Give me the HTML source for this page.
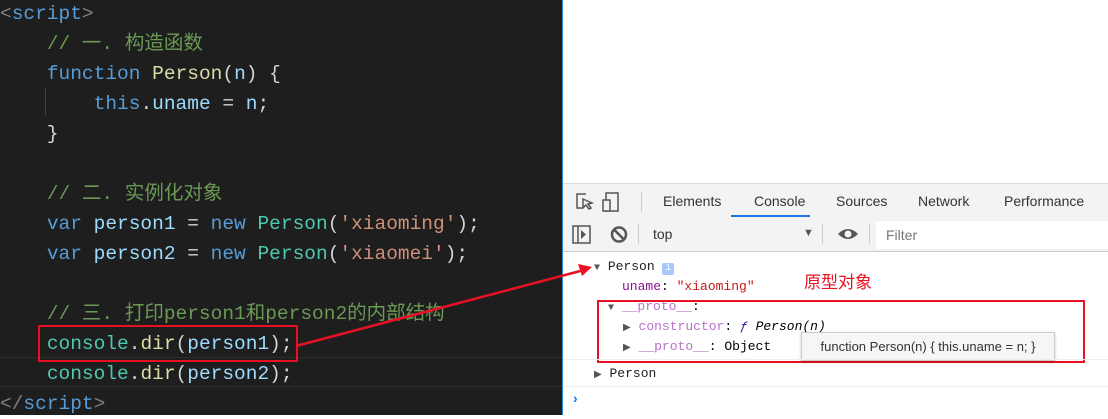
<!DOCTYPE html>
<html><head><meta charset="utf-8"><style>
body{margin:0;width:1108px;height:415px;position:relative;overflow:hidden;background:#fff;font-family:"Liberation Sans",sans-serif}
#code{position:absolute;left:0;top:0;width:562px;height:415px;background:#1e1e1e;font-family:"Liberation Mono","Noto Sans CJK SC",monospace;font-size:19.5px;color:#d4d4d4}
.l{position:absolute;left:0;height:30px;line-height:30px;white-space:pre}
.k{color:#569cd6}.f{color:#dcdcaa}.v{color:#9cdcfe}.c{color:#6a9955}.g{color:#4ec9b0}.s{color:#ce9178}.t{color:#808080}
#blue{position:absolute;left:562px;top:0;width:1px;height:415px;background:#2b8ad8}
.dt{position:absolute;left:563px;right:0}
.mono{font-family:"Liberation Mono",monospace;font-size:13px}
</style></head><body>
<div id="code">
<div style="position:absolute;left:0;top:357px;width:562px;height:28px;border-top:1px solid #2c2c2c;border-bottom:1px solid #2c2c2c"></div>
<div style="position:absolute;left:45px;top:88px;width:1px;height:28px;background:#404040"></div>
<div class="l" style="top:-1px"><span class="t">&lt;</span><span class="k">script</span><span class="t">&gt;</span></div>
<div class="l" style="top:29px">    <span class="c">// 一. 构造函数</span></div>
<div class="l" style="top:59px">    <span class="k">function</span> <span class="f">Person</span>(<span class="v">n</span>) {</div>
<div class="l" style="top:89px">        <span class="k">this</span>.<span class="v">uname</span> = <span class="v">n</span>;</div>
<div class="l" style="top:119px">    }</div>
<div class="l" style="top:179px">    <span class="c">// 二. 实例化对象</span></div>
<div class="l" style="top:209px">    <span class="k">var</span> <span class="v">person1</span> = <span class="k">new</span> <span class="g">Person</span>(<span class="s">'xiaoming'</span>);</div>
<div class="l" style="top:239px">    <span class="k">var</span> <span class="v">person2</span> = <span class="k">new</span> <span class="g">Person</span>(<span class="s">'xiaomei'</span>);</div>
<div class="l" style="top:299px">    <span class="c">// 三. 打印person1和person2的内部结构</span></div>
<div class="l" style="top:329px">    <span class="g">console</span>.<span class="f">dir</span>(<span class="v">person1</span>);</div>
<div class="l" style="top:359px">    <span class="g">console</span>.<span class="f">dir</span>(<span class="v">person2</span>);</div>
<div class="l" style="top:389px"><span class="t">&lt;/</span><span class="k">script</span><span class="t">&gt;</span></div>
<div style="position:absolute;left:38px;top:325px;width:256px;height:33px;border:2px solid #e81123"></div>
</div>
<div id="blue"></div>
<div class="dt" style="top:183px;height:34px;background:#f3f3f3;border-top:1px solid #ddd;border-bottom:1px solid #ccc"></div>
<svg style="position:absolute;left:574px;top:190px" width="50" height="24"><path d="M12 4H3v14h5M9 9l9 4-4 1 3 4-2 1-3-4-3 3z" fill="none" stroke="#555" stroke-width="1.5"/><rect x="32" y="3" width="12" height="18" fill="none" stroke="#555" stroke-width="1.5"/><rect x="29" y="10" width="7" height="11" fill="#f3f3f3" stroke="#555" stroke-width="1.5"/></svg>
<div style="position:absolute;left:641px;top:192px;width:1px;height:20px;background:#ccc"></div>
<div style="position:absolute;top:193px;left:663px;font-size:14px;color:#333">Elements</div>
<div style="position:absolute;top:193px;left:754px;font-size:14px;color:#333">Console</div>
<div style="position:absolute;top:193px;left:836px;font-size:14px;color:#333">Sources</div>
<div style="position:absolute;top:193px;left:918px;font-size:14px;color:#333">Network</div>
<div style="position:absolute;top:193px;left:1004px;font-size:14px;color:#333">Performance</div>
<div style="position:absolute;left:731px;top:215px;width:79px;height:2px;background:#1a73e8"></div>
<div class="dt" style="top:218px;height:33px;background:#f3f3f3;border-bottom:1px solid #ccc"></div>
<svg style="position:absolute;left:570px;top:224px" width="60" height="22"><rect x="3" y="2" width="17" height="17" fill="none" stroke="#555" stroke-width="1.5"/><line x1="8" y1="2" x2="8" y2="19" stroke="#555" stroke-width="1.5"/><path d="M11 6l5 4.5-5 4.5z" fill="#555"/><circle cx="49" cy="10.5" r="7" fill="none" stroke="#555" stroke-width="2.5"/><line x1="44" y1="5.5" x2="54" y2="15.5" stroke="#555" stroke-width="2.5"/></svg>
<div style="position:absolute;left:638px;top:224px;width:1px;height:20px;background:#ccc"></div>
<div style="position:absolute;left:653px;top:226px;font-size:14px;color:#333">top</div>
<div style="position:absolute;left:803px;top:227px;font-size:11px;color:#555">▼</div>
<div style="position:absolute;left:822px;top:224px;width:1px;height:20px;background:#ccc"></div>
<svg style="position:absolute;left:836px;top:226px" width="24" height="16"><path d="M2 8Q12-2 22 8Q12 18 2 8z" fill="#555"/><circle cx="12" cy="8" r="3.5" fill="#f3f3f3"/></svg>
<div style="position:absolute;left:869px;top:224px;width:1px;height:20px;background:#ccc"></div>
<div style="position:absolute;left:876px;top:221px;right:0;height:28px;background:#fff"></div>
<div style="position:absolute;left:886px;top:227px;font-size:14px;color:#777">Filter</div>
<div class="mono" style="position:absolute;left:594px;top:259px;color:#222"><span style="color:#555;font-size:10px">▼</span> Person <span style="display:inline-block;width:12px;height:12px;background:#a8c7fa;color:#fff;font-size:10px;text-align:center;line-height:12px;border-radius:2px">i</span></div>
<div class="mono" style="position:absolute;left:622px;top:279px"><span style="color:#881391">uname</span>: <span style="color:#c41a16">"xiaoming"</span></div>
<div style="position:absolute;left:804px;top:268px;font-size:17px;color:#e81123;font-family:'Liberation Sans','Noto Sans CJK SC',sans-serif">原型对象</div>
<div class="mono" style="position:absolute;left:608px;top:299px"><span style="color:#555;font-size:10px">▼</span> <span style="color:#b871c9">__proto__</span>:</div>
<div class="mono" style="position:absolute;left:623px;top:319px"><span style="color:#555;font-size:10px">▶</span> <span style="color:#b871c9">constructor</span>: <i style="color:#1a1aa6">ƒ</i> <i>Person(n)</i></div>
<div class="mono" style="position:absolute;left:623px;top:339px"><span style="color:#555;font-size:10px">▶</span> <span style="color:#b871c9">__proto__</span>: Object</div>
<div style="position:absolute;left:597px;top:300px;width:484px;height:59px;border:2px solid #e81123"></div>
<div style="position:absolute;left:801px;top:332px;width:252px;height:27px;background:#f6f6f6;border:1px solid #ccc;box-shadow:0 1px 3px rgba(0,0,0,.2);font-size:13px;line-height:27px;color:#333;text-align:center">function Person(n) { this.uname = n; }</div>
<div class="dt" style="top:359px;height:1px;background:#eee"></div>
<div class="mono" style="position:absolute;left:594px;top:366px;color:#222"><span style="color:#555;font-size:10px">▶</span> Person</div>
<div class="dt" style="top:386px;height:1px;background:#eee"></div>
<div style="position:absolute;left:573px;top:390px;color:#1a73e8;font-size:14px;font-weight:bold">›</div>
<svg style="position:absolute;left:0;top:0" width="1108" height="415"><line x1="296" y1="346" x2="584" y2="270" stroke="#e81123" stroke-width="2.5"/><path d="M592 267l-14-3 4 12z" fill="#e81123"/></svg>
</body></html>
